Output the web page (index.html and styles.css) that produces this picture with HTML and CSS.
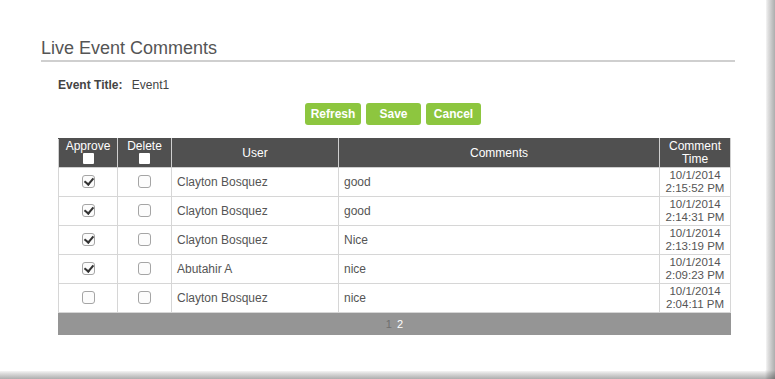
FILE: index.html
```html
<!DOCTYPE html>
<html lang="en">
<head>
    <meta charset="UTF-8">
    <title>Live Event Comments</title>
    <link rel="stylesheet" href="styles.css">
</head>
<body>
    <div class="frame">
        <div class="page">
            <h1 class="page-title">Live Event Comments</h1>

            <div class="content">
                <div class="event-row">
                    <span class="event-label">Event Title:</span>
                    <span class="event-value">Event1</span>
                </div>

                <div class="actions">
                    <button class="btn btn-refresh">Refresh</button>
                    <button class="btn">Save</button>
                    <button class="btn">Cancel</button>
                </div>

                <table class="grid">
                    <colgroup>
                        <col class="col-approve">
                        <col class="col-delete">
                        <col class="col-user">
                        <col class="col-comments">
                        <col class="col-time">
                    </colgroup>
                    <thead>
                        <tr>
                            <th>Approve<br><span class="head-box"></span></th>
                            <th>Delete<br><span class="head-box"></span></th>
                            <th>User</th>
                            <th>Comments</th>
                            <th>Comment<br>Time</th>
                        </tr>
                    </thead>
                    <tbody>
                        <tr>
                            <td class="center"><span class="cb checked"></span></td>
                            <td class="center"><span class="cb"></span></td>
                            <td>Clayton Bosquez</td>
                            <td>good</td>
                            <td class="time">10/1/2014<br>2:15:52 PM</td>
                        </tr>
                        <tr>
                            <td class="center"><span class="cb checked"></span></td>
                            <td class="center"><span class="cb"></span></td>
                            <td>Clayton Bosquez</td>
                            <td>good</td>
                            <td class="time">10/1/2014<br>2:14:31 PM</td>
                        </tr>
                        <tr>
                            <td class="center"><span class="cb checked"></span></td>
                            <td class="center"><span class="cb"></span></td>
                            <td>Clayton Bosquez</td>
                            <td>Nice</td>
                            <td class="time">10/1/2014<br>2:13:19 PM</td>
                        </tr>
                        <tr>
                            <td class="center"><span class="cb checked"></span></td>
                            <td class="center"><span class="cb"></span></td>
                            <td>Abutahir A</td>
                            <td>nice</td>
                            <td class="time">10/1/2014<br>2:09:23 PM</td>
                        </tr>
                        <tr>
                            <td class="center"><span class="cb"></span></td>
                            <td class="center"><span class="cb"></span></td>
                            <td>Clayton Bosquez</td>
                            <td>nice</td>
                            <td class="time">10/1/2014<br>2:04:11 PM</td>
                        </tr>
                    </tbody>
                    <tfoot>
                        <tr>
                            <td colspan="5" class="pager">
                                <span class="page-current">1</span>
                                <a class="page-link">2</a>
                            </td>
                        </tr>
                    </tfoot>
                </table>
            </div>
        </div>
    </div>
</body>
</html>
```

FILE: styles.css
```css
html, body {
    margin: 0;
    font-family: "Liberation Sans", Arial, sans-serif;
    color: #555;
}
html {
    min-height: 379px;
    background-color: #fff;
    background-image:
        linear-gradient(to bottom, rgba(0, 0, 0, 0) 370px, rgba(0, 0, 0, 0.12) 373px, rgba(0, 0, 0, 0.32) 379px),
        linear-gradient(to right, rgba(0, 0, 0, 0) 765px, rgba(0, 0, 0, 0.12) 768px, rgba(0, 0, 0, 0.32) 775px);
}
body {
    background: transparent;
}
.frame {
    width: 766px;
    height: 371px;
    background: #fff;
    border-bottom-right-radius: 2px;
    overflow: hidden;
}
.page {
    padding: 37px 31px 0 41px;
}
.page-title {
    margin: 0;
    font-size: 18px;
    font-weight: normal;
    line-height: 22px;
    color: #555;
    border-bottom: 2px solid #cfcfcf;
    padding-bottom: 1px;
}
.content {
    width: 672px;
    margin-left: 17px;
}
.event-row {
    margin-top: 16px;
    font-size: 12px;
    line-height: 14px;
    color: #444;
}
.event-label {
    font-weight: bold;
    margin-right: 6px;
}
.actions {
    display: flex;
    justify-content: center;
    gap: 5px;
    margin-top: 11px;
    padding-right: 2px;
}
.btn {
    height: 22px;
    width: 55px;
    padding: 0;
    border: none;
    border-radius: 3px;
    background: #8dc63f;
    color: #fff;
    font-family: inherit;
    font-size: 12px;
    font-weight: bold;
}
.btn-refresh {
    width: 56px;
}
.grid {
    margin-top: 13px;
    width: 672px;
    border-collapse: collapse;
    table-layout: fixed;
    font-size: 12px;
}
.col-approve { width: 59px; }
.col-delete { width: 54px; }
.col-user { width: 167px; }
.col-comments { width: 321px; }
.col-time { width: 71px; }
.grid th {
    background: #505050;
    color: #fff;
    font-weight: normal;
    line-height: 13px;
    height: 28px;
    padding: 0 2px;
    border: 1px solid #cfcfcf;
    border-top-color: #505050;
    vertical-align: middle;
}
.head-box {
    display: inline-block;
    width: 11px;
    height: 11px;
    background: #fff;
    border-radius: 1px;
    vertical-align: top;
}
.grid td {
    height: 28px;
    padding: 0 5px;
    border: 1px solid #d6d6d6;
    line-height: 12px;
    vertical-align: middle;
}
.grid td.center {
    text-align: center;
    padding: 0;
}
.grid td.time {
    text-align: center;
    padding: 0 2px;
    font-size: 11.5px;
    line-height: 13px;
}
.cb {
    display: inline-block;
    width: 11px;
    height: 11px;
    border: 1px solid #a5a5a5;
    border-radius: 3px;
    background: #fcfcfc;
    vertical-align: middle;
    position: relative;
    top: -1px;
}
.cb.checked::after {
    content: "";
    position: absolute;
    left: 3px;
    top: 0;
    width: 4px;
    height: 7px;
    border-right: 2px solid #333;
    border-bottom: 2px solid #333;
    transform: rotate(40deg);
}
.grid td.pager {
    height: 21px;
    background: #959595;
    border-color: #959595;
    text-align: center;
    font-size: 11px;
    padding: 0;
}
.page-current {
    color: #6f6f6f;
}
.page-link {
    color: #fff;
    margin-left: 2px;
}
```
